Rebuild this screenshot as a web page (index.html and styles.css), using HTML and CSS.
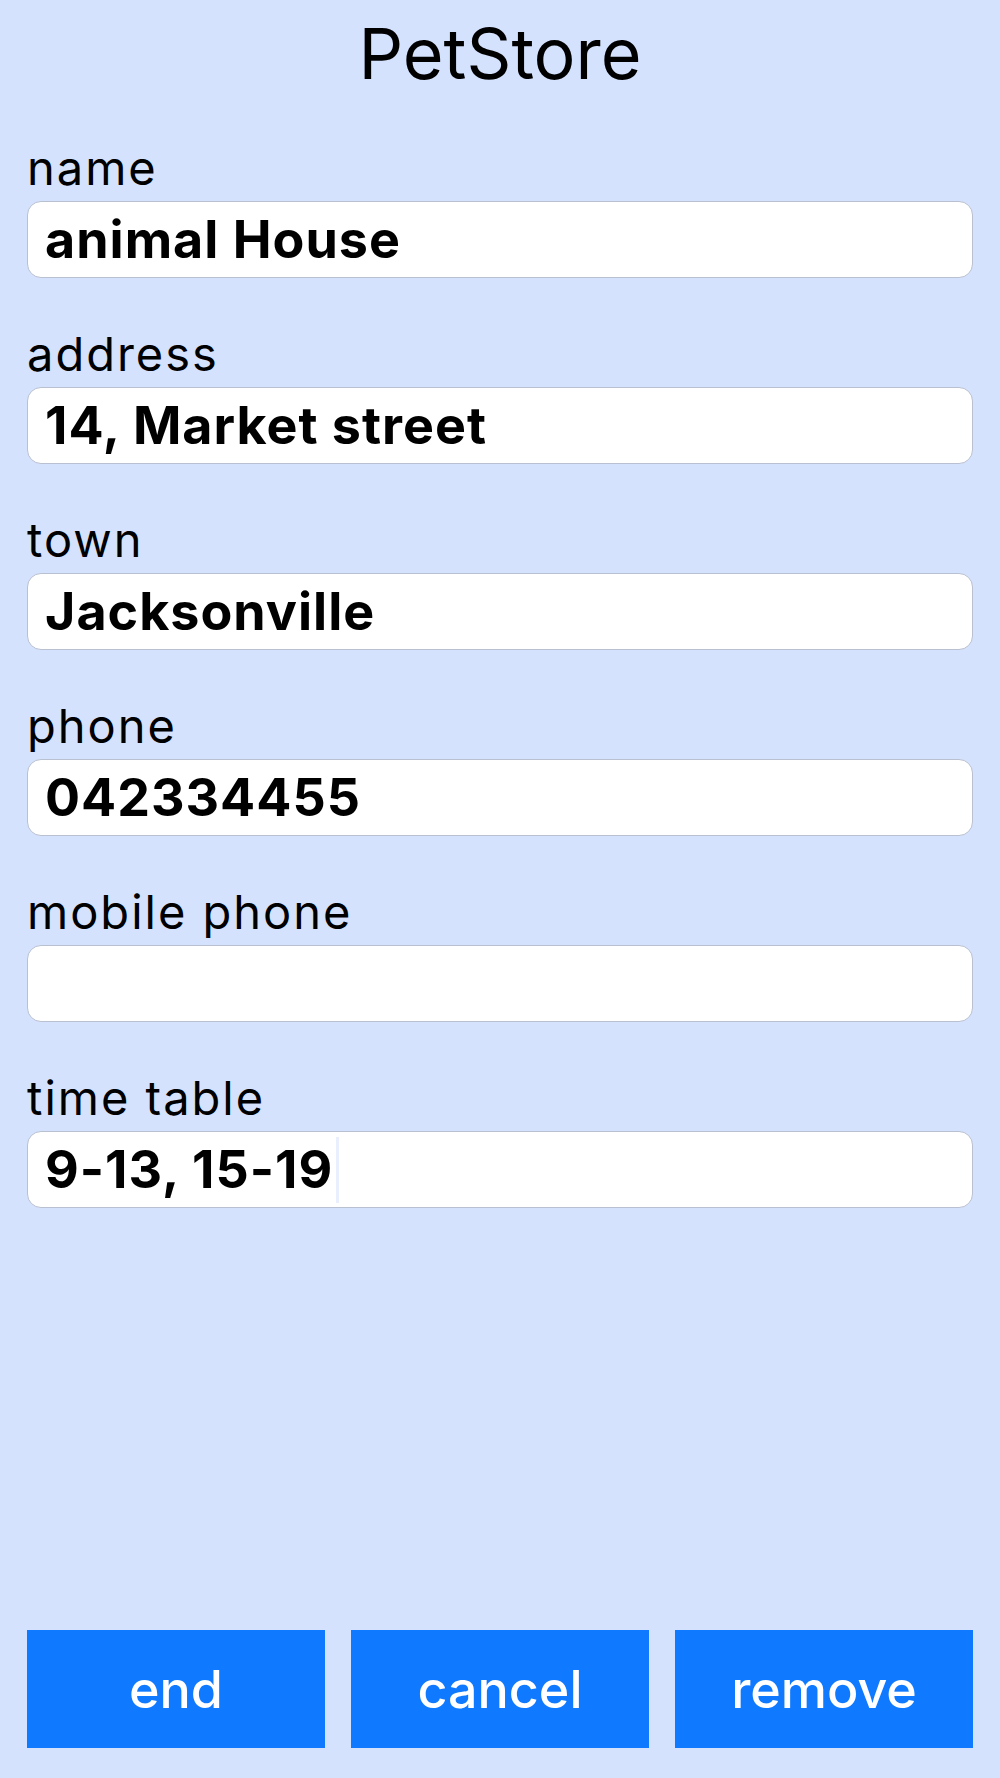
FILE: index.html
```html
<!DOCTYPE html>
<html lang="en">

<head>
  <meta charset="UTF-8">
  <meta name="viewport" content="width=device-width, initial-scale=1.0">
  <title>PetStore</title>
  <link rel="stylesheet" href="styles.css">
</head>

<body>
  <div class="page">
    <h1 class="title">PetStore</h1>

    <div class="form">
      <div class="field">
        <div class="label">name</div>
        <div class="input">animal House</div>
      </div>
      <div class="field">
        <div class="label">address</div>
        <div class="input">14, Market street</div>
      </div>
      <div class="field">
        <div class="label">town</div>
        <div class="input">Jacksonville</div>
      </div>
      <div class="field">
        <div class="label">phone</div>
        <div class="input">042334455</div>
      </div>
      <div class="field">
        <div class="label">mobile phone</div>
        <div class="input"></div>
      </div>
      <div class="field">
        <div class="label">time table</div>
        <div class="input">9-13, 15-19<span class="caret"></span></div>
      </div>
    </div>

    <div class="buttons">
      <div class="btn">end</div>
      <div class="btn">cancel</div>
      <div class="btn">remove</div>
    </div>
  </div>
</body>

</html>
```

FILE: styles.css
```css
body {
  margin: 0;
  background: #d4e2fe;
  font-family: Inter, 'Liberation Sans', sans-serif;
  color: #000;
}

.page {
  height: 1778px;
  box-sizing: border-box;
  padding: 10px 27px 30px;
  display: flex;
  flex-direction: column;
}

.title {
  margin: 0 0 42px;
  font-size: 70px;
  font-weight: 400;
  line-height: 88px;
  text-align: center;
}

.form {
  flex: 1;
}

.field {
  margin-bottom: 48px;
}

.label {
  font-size: 47px;
  line-height: 56px;
  letter-spacing: 2px;
  margin-bottom: 5px;
}

.input {
  height: 75px;
  border: 1px solid #b9c0cf;
  border-radius: 14px;
  background: #fff;
  padding: 0 17px;
  font-size: 52px;
  font-weight: 700;
  letter-spacing: 1px;
  line-height: 75px;
  display: flex;
  align-items: center;
}

.caret {
  width: 3px;
  height: 66px;
  margin-left: 3px;
  background: #eaeffd;
}

.buttons {
  display: flex;
  gap: 26px;
}

.btn {
  flex: 1;
  height: 118px;
  background: #0f7aff;
  color: #fff;
  font-size: 52px;
  font-weight: 500;
  display: flex;
  align-items: center;
  justify-content: center;
}
```
